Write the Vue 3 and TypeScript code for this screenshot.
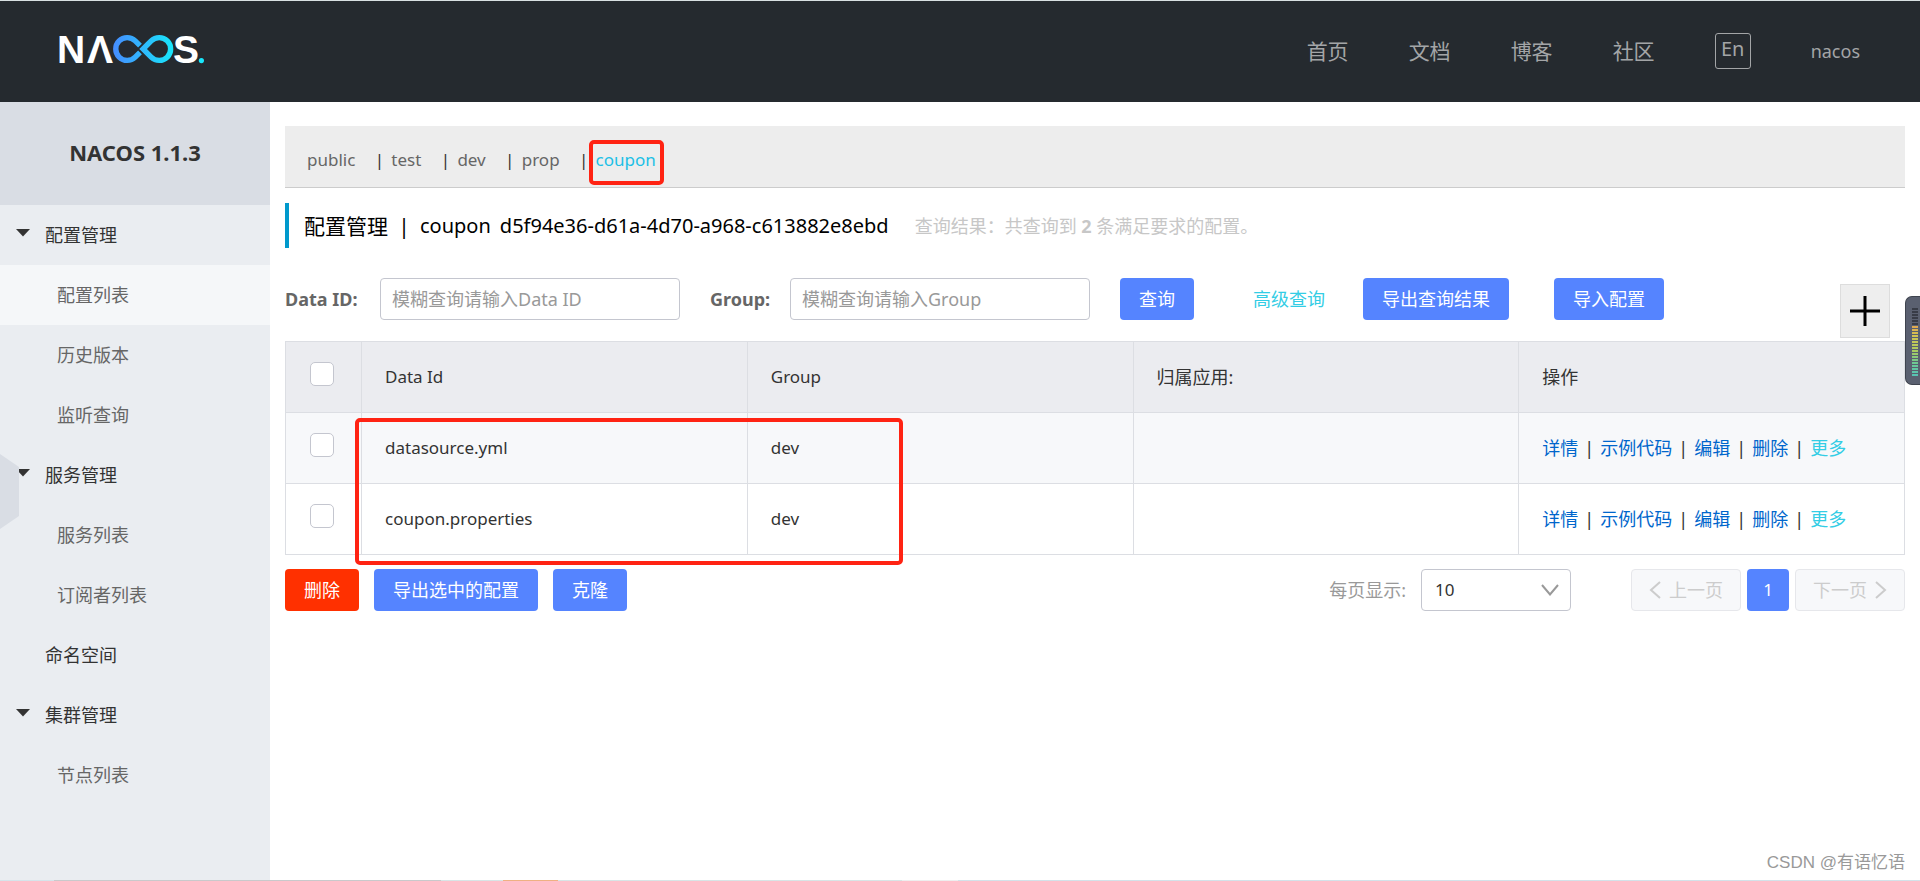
<script setup lang="ts">
import { ref } from 'vue'

interface MenuItem {
  label: string
  level: 1 | 2
  open?: boolean
  active?: boolean
}

interface ConfigRow {
  dataId: string
  group: string
  app: string
}

const navLinks = ['首页', '文档', '博客', '社区']

const menu: MenuItem[] = [
  { label: '配置管理', level: 1, open: true },
  { label: '配置列表', level: 2, active: true },
  { label: '历史版本', level: 2 },
  { label: '监听查询', level: 2 },
  { label: '服务管理', level: 1, open: true },
  { label: '服务列表', level: 2 },
  { label: '订阅者列表', level: 2 },
  { label: '命名空间', level: 1 },
  { label: '集群管理', level: 1, open: true },
  { label: '节点列表', level: 2 },
]

const namespaces = ['public', 'test', 'dev', 'prop', 'coupon']
const current = ref('coupon')

const rows: ConfigRow[] = [
  { dataId: 'datasource.yml', group: 'dev', app: '' },
  { dataId: 'coupon.properties', group: 'dev', app: '' },
]
const actions = ['详情', '示例代码', '编辑', '删除']

const dataId = ref('')
const group = ref('')
const pageSize = ref('10')
</script>

<template>
  <div class="page">
    <header class="top">
      <a class="logo" href="#" aria-label="NACOS">
        <svg width="150" height="60" viewBox="56 18 150 60">
          <defs>
            <linearGradient id="loop" gradientUnits="userSpaceOnUse" x1="113" y1="48" x2="173" y2="48">
              <stop offset="0" stop-color="#468cff" />
              <stop offset="1" stop-color="#18e6fb" />
            </linearGradient>
          </defs>
          <g class="logo-text">
            <text x="57" y="62">N</text>
            <text x="87" y="62">Λ</text>
            <text x="173" y="62">S</text>
          </g>
          <g fill="none" stroke="url(#loop)" stroke-width="5.4">
            <path d="M140 44.6 L135.2 39.9 A11.4 11.4 0 1 0 135.2 56.1 L140 51.4" />
            <path d="M143.1 48 L151.2 39.9 A11.4 11.4 0 1 1 151.2 56.1 Z" />
          </g>
          <circle cx="201.4" cy="59.6" r="2.6" fill="#18e6fb" />
        </svg>
      </a>
      <nav class="top-nav">
        <a v-for="n in navLinks" :key="n" href="#">{{ n }}</a>
        <button class="lang" type="button">En</button>
        <a class="user" href="#">nacos</a>
      </nav>
    </header>

    <div class="body">
      <aside class="side">
        <h1>NACOS 1.1.3</h1>
        <ul>
          <li v-for="m in menu" :key="m.label">
            <a href="#" :class="['item', 'level-' + m.level, { active: m.active }]">
              <svg v-if="m.open" class="caret" width="14" height="8" viewBox="0 0 14 8">
                <path d="M0 0H14L7 7.5Z" fill="#333" />
              </svg>
              {{ m.label }}
            </a>
          </li>
        </ul>
        <button class="handle" type="button" aria-label="收起菜单"></button>
      </aside>

      <main class="main">
        <div class="spaces">
          <template v-for="(n, i) in namespaces" :key="n">
            <span v-if="i" class="bar">|</span>
            <button type="button" :class="['space', { current: n === current }]" @click="current = n">{{ n }}</button>
          </template>
        </div>

        <h2 class="title">
          <span class="name">配置管理</span>
          <span class="divider">|</span>
          <span class="latin">coupon</span>
          <span class="latin uuid">d5f94e36-d61a-4d70-a968-c613882e8ebd</span>
          <span class="result">查询结果：共查询到 <strong>2</strong> 条满足要求的配置。</span>
        </h2>

        <form class="filters" @submit.prevent>
          <label for="data-id">Data ID:</label>
          <input id="data-id" v-model="dataId" type="text" placeholder="模糊查询请输入Data ID" />
          <label class="second" for="group">Group:</label>
          <input id="group" v-model="group" type="text" placeholder="模糊查询请输入Group" />
          <button class="btn search" type="submit">查询</button>
          <a class="advanced" href="#">高级查询</a>
          <button class="btn export" type="button">导出查询结果</button>
          <button class="btn import" type="button">导入配置</button>
          <button class="add" type="button" aria-label="新建配置">
            <svg width="30" height="30" viewBox="0 0 30 30">
              <path d="M15 0V30M0 15H30" stroke="#000" stroke-width="3" />
            </svg>
          </button>
        </form>

        <div class="table-wrap">
          <table>
            <colgroup>
              <col class="col-check" />
              <col />
              <col />
              <col />
              <col />
            </colgroup>
            <thead>
              <tr>
                <th class="check"><input type="checkbox" aria-label="全选" /></th>
                <th>Data Id</th>
                <th>Group</th>
                <th class="cjk">归属应用:</th>
                <th class="cjk">操作</th>
              </tr>
            </thead>
            <tbody>
              <tr v-for="r in rows" :key="r.dataId">
                <td class="check"><input type="checkbox" :aria-label="r.dataId" /></td>
                <td>{{ r.dataId }}</td>
                <td>{{ r.group }}</td>
                <td>{{ r.app }}</td>
                <td class="cjk">
                  <div class="actions">
                    <template v-for="a in actions" :key="a">
                      <a href="#">{{ a }}</a><span class="pipe">|</span>
                    </template>
                    <a class="more" href="#">更多</a>
                  </div>
                </td>
              </tr>
            </tbody>
          </table>
          <div class="mark-rows"></div>
        </div>

        <div class="foot">
          <button class="btn danger" type="button">删除</button>
          <button class="btn" type="button">导出选中的配置</button>
          <button class="btn" type="button">克隆</button>
          <label class="size-label" for="size">每页显示:</label>
          <div class="select">
            <select id="size" v-model="pageSize">
              <option>10</option>
              <option>20</option>
              <option>50</option>
            </select>
            <svg width="18" height="12" viewBox="0 0 18 12">
              <path d="M1 1L9 10.5L17 1" fill="none" stroke="#999" stroke-width="2" />
            </svg>
          </div>
          <div class="pager">
            <button class="step" type="button" disabled>
              <svg width="12" height="18" viewBox="0 0 12 18">
                <path d="M11 1L2 9L11 17" fill="none" stroke="#ccc" stroke-width="2" />
              </svg>
              <span>上一页</span>
            </button>
            <button class="num" type="button">1</button>
            <button class="step" type="button" disabled>
              <span>下一页</span>
              <svg width="12" height="18" viewBox="0 0 12 18">
                <path d="M1 1L10 9L1 17" fill="none" stroke="#ccc" stroke-width="2" />
              </svg>
            </button>
          </div>
        </div>
      </main>
    </div>

    <div class="meter"><i class="off"></i><i class="on"></i></div>
    <div class="watermark">CSDN @有语忆语</div>
    <div class="strip"></div>
  </div>
</template>

<style>
body {
  margin: 0;
}
</style>

<style scoped>
.page {
  position: relative;
  display: flex;
  flex-direction: column;
  min-height: 100vh;
  background: #fff;
  color: #333;
  font: 18px/24px "Noto Sans", "Noto Sans CJK SC", sans-serif;
}
.page *,
.page {
  box-sizing: border-box;
}
a {
  color: inherit;
  text-decoration: none;
}
button,
input,
select {
  margin: 0;
  font: inherit;
  color: inherit;
}
button {
  padding: 0;
  border: 0;
  background: none;
  cursor: pointer;
}

.top {
  display: flex;
  align-items: center;
  justify-content: space-between;
  height: 102px;
  padding: 0 60px 2px 56px;
  border-top: 1px solid #d9e0e2;
  background: #252a2f;
  color: #a3a5a7;
}
.logo {
  display: block;
  margin-bottom: 4px;
}
.logo svg {
  display: block;
}
.logo-text {
  fill: #fff;
  font: bold 39px "Liberation Sans", sans-serif;
}
.top-nav {
  display: flex;
  align-items: center;
  gap: 60px;
  font-size: 21px;
}
.lang {
  width: 36px;
  height: 36px;
  padding-bottom: 4px;
  border: 1px solid #a3a5a7;
  border-radius: 3px;
  font-size: 20px;
  line-height: 30px;
}
.user {
  font-size: 18px;
}

.body {
  display: flex;
  flex: 1;
}
.side {
  position: relative;
  flex: none;
  width: 270px;
  background: #eaedf1;
}
.side h1 {
  margin: 0;
  padding-bottom: 2px;
  background: #d9dde4;
  font-size: 22px;
  line-height: 101px;
  text-align: center;
}
.side ul {
  margin: 0;
  padding: 0;
  list-style: none;
}
.item {
  position: relative;
  display: block;
  padding-left: 57px;
  line-height: 60px;
  color: #666;
}
.item.level-1 {
  padding-left: 45px;
  color: #333;
}
.item.active {
  background: #f5f7f9;
}
.caret {
  position: absolute;
  left: 16px;
  top: 24px;
}
.handle {
  position: absolute;
  left: 0;
  top: 352px;
  width: 19px;
  height: 75px;
  background: #d9dde4;
  clip-path: polygon(0 0, 100% 13px, 100% 62px, 0 100%);
}

.main {
  flex: 1;
  min-width: 0;
  padding: 24px 15px 0;
}
.spaces {
  display: flex;
  align-items: center;
  height: 62px;
  padding: 6px 22px 0;
  border-bottom: 1px solid #ccc;
  background: #ededed;
  font-size: 17px;
}
.space {
  position: relative;
  color: #666;
}
.bar {
  width: 10px;
  margin: 0 7px 0 19px;
  text-align: center;
}
.space.current {
  color: #1cc0e6;
}
.space.current::after {
  content: "";
  position: absolute;
  inset: -8px -8px -13px -7px;
  border: 4px solid #ff2313;
  border-radius: 5px;
}
.title {
  display: flex;
  align-items: center;
  height: 45px;
  margin: 15px 0 30px;
  padding-left: 15px;
  border-left: 4px solid #09c;
  color: #000;
  font-size: 21px;
  font-weight: 400;
}
.divider {
  width: 32px;
  text-align: center;
}
.latin {
  font-size: 20px;
}
.uuid {
  margin-left: 9px;
}
.result {
  margin-left: 26px;
  color: #c7c7c7;
  font-size: 18px;
}

.filters {
  position: relative;
  display: flex;
  align-items: center;
  margin-bottom: 21px;
}
.filters label {
  width: 95px;
  color: #666;
  font-weight: 700;
}
.filters label.second {
  width: 80px;
  margin-left: 30px;
}
.filters input {
  width: 300px;
  height: 42px;
  padding: 0 11px;
  border: 1px solid #c4c6cf;
  border-radius: 4px;
  background: #fff;
  outline: 0;
}
.filters input::placeholder {
  color: #999;
  opacity: 1;
}
.btn {
  height: 42px;
  padding: 0 19px;
  border-radius: 4px;
  background: #5584ff;
  color: #fff;
  white-space: nowrap;
}
.search {
  margin-left: 30px;
}
.advanced {
  margin: 0 38px 0 59px;
  color: #33cde5;
}
.import {
  margin-left: 45px;
}
.add {
  position: absolute;
  right: 15px;
  top: 6px;
  display: flex;
  align-items: center;
  justify-content: center;
  width: 50px;
  height: 54px;
  border: 1px solid #ddd;
  background: #eee;
}

.table-wrap {
  position: relative;
}
table {
  width: 100%;
  border-collapse: collapse;
  table-layout: fixed;
}
.col-check {
  width: 76px;
}
th,
td {
  height: 71px;
  padding: 0 23px;
  border: 1px solid #dcdee3;
  font-size: 17px;
  font-weight: 400;
  text-align: left;
}
th {
  background: #ebecf0;
}
tbody tr:first-child {
  background: #f7f8fa;
}
.cjk {
  font-size: 18px;
}
.check {
  padding: 0 24px;
}
.check input {
  display: block;
  width: 24px;
  height: 24px;
  margin-bottom: 6px;
  border: 1px solid #c4c6cf;
  border-radius: 5px;
  background: #fff;
  appearance: none;
}
.actions {
  display: flex;
  color: #06c;
}
.pipe {
  width: 22px;
  color: #333;
  text-align: center;
}
.more {
  color: #33cde5;
}
.mark-rows {
  position: absolute;
  left: 70px;
  top: 77px;
  width: 548px;
  height: 147px;
  border: 4px solid #ff2313;
  border-radius: 5px;
  pointer-events: none;
}

.foot {
  display: flex;
  align-items: center;
  gap: 15px;
  margin-top: 14px;
}
.btn.danger {
  background: #ff3000;
}
.size-label {
  margin-left: auto;
  color: #999;
}
.select {
  position: relative;
  width: 150px;
}
.select select {
  width: 100%;
  height: 42px;
  padding: 0 13px;
  border: 1px solid #c4c6cf;
  border-radius: 4px;
  background: #fff;
  font-size: 17px;
  appearance: none;
}
.select svg {
  position: absolute;
  right: 12px;
  top: 15px;
  pointer-events: none;
}
.pager {
  display: flex;
  gap: 6px;
  margin-left: 45px;
}
.step {
  display: flex;
  align-items: center;
  justify-content: center;
  gap: 8px;
  width: 110px;
  height: 42px;
  border: 1px solid #e6e7eb;
  border-radius: 4px;
  background: #f7f8fa;
  color: #ccc;
}
.num {
  width: 42px;
  height: 42px;
  border-radius: 4px;
  background: #5584ff;
  color: #fff;
  font-size: 17px;
}

.meter {
  position: absolute;
  right: 0;
  top: 296px;
  width: 15px;
  height: 89px;
  padding: 11px 2px 0 6px;
  border: 1px solid #3f444f;
  border-right: 0;
  border-radius: 7px 0 0 7px;
  background: #5a6070;
}
.meter i {
  display: block;
  -webkit-mask: repeating-linear-gradient(#000 0 2px, transparent 2px 3px);
  mask: repeating-linear-gradient(#000 0 2px, transparent 2px 3px);
}
.off {
  height: 18px;
  background: #383c47;
}
.on {
  height: 50px;
  background: linear-gradient(#e0a850, #d3c552 20%, #a9cc60 50%, #6cc995 75%, #56c4b4);
}
.watermark {
  position: absolute;
  right: 15px;
  bottom: 6px;
  color: #999;
  font-family: "Liberation Sans", "Noto Sans CJK SC", sans-serif;
  font-size: 17px;
}
.strip {
  position: absolute;
  left: 0;
  right: 0;
  bottom: 0;
  height: 1px;
  background: linear-gradient(
    to right,
    #d6e4ea 54px,
    #c9c9cb 54px 441px,
    #d8e5e6 441px 503px,
    #efb183 503px 558px,
    #d8e5e6 558px 902px,
    #eee 902px 958px,
    #d3e2e9 958px
  );
}
</style>
